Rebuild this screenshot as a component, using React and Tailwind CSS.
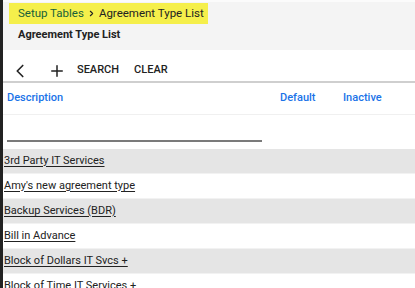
import { ChevronLeft, ChevronRight, Plus } from 'lucide-react'

const rows = [
  '3rd Party IT Services',
  "Amy's new agreement type",
  'Backup Services (BDR)',
  'Bill in Advance',
  'Block of Dollars IT Svcs +',
  'Block of Time IT Services +',
]

export default function App() {
  return (
    <div className="w-[415px] h-[288px] overflow-hidden bg-white border-l-[3px] border-[#222] font-['Roboto',sans-serif] text-[#222]">
      {/* Header */}
      <div className="bg-[#f4f4f4] border-t-2 border-[#fbfbfb] h-[50px] pl-[6px]">
        <div className="mt-[1px] w-[199px] h-[21px] bg-[#f5ef4b] flex items-center pl-[9px] text-[11.5px] whitespace-nowrap">
          <span className="text-[#17613a]">Setup Tables</span>
          <ChevronRight size={9} strokeWidth={3} className="shrink-0 mx-[3px] text-[#222]" />
          <span className="text-[#222]">Agreement Type List</span>
        </div>
        <div className="pl-[9px] mt-[3px] text-[11px] font-bold leading-[16px]">Agreement Type List</div>
      </div>

      {/* Toolbar */}
      <div className="h-[33px] pt-[10px] flex items-center border-b-2 border-[#cfcfcf]">
        <ChevronLeft size={22} strokeWidth={1.8} className="ml-[6px] text-[#222]" />
        <Plus size={18} strokeWidth={2} className="ml-[17px] text-[#222]" />
        <span className="ml-[11px] text-[11px] font-medium">SEARCH</span>
        <span className="ml-[15px] text-[11px] font-medium">CLEAR</span>
      </div>

      {/* Column headers */}
      <div className="h-[32px] flex items-center text-[11px] font-medium text-[#1a73e8] border-b border-[#f0f0f0]">
        <span className="ml-[4px] w-[273px]">Description</span>
        <span className="w-[63px]">Default</span>
        <span>Inactive</span>
      </div>

      {/* Filter */}
      <div className="h-[34px] flex items-end pb-[7px] pl-[4px]">
        <div className="w-[255px] border-b-2 border-[#7a7a7a]" />
      </div>

      {rows.map((r, i) => (
        <div
          key={r}
          className={`h-[25px] flex items-center pl-[1px] text-[11px] border-b border-[#f2f2f2] ${i % 2 === 0 ? 'bg-[#e5e5e5]' : 'bg-white'}`}
        >
          <span className="underline underline-offset-2">{r}</span>
        </div>
      ))}
    </div>
  )
}
